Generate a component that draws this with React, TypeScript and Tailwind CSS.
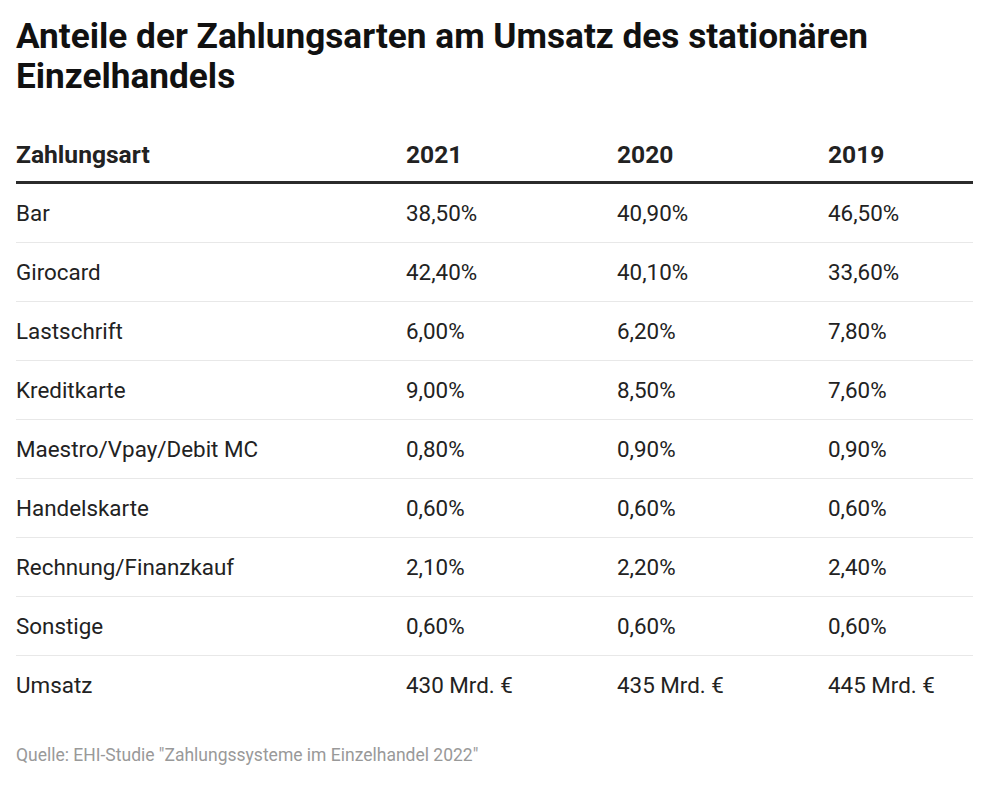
import React from 'react';

const rows: [string, string, string, string][] = [
  ['Bar', '38,50%', '40,90%', '46,50%'],
  ['Girocard', '42,40%', '40,10%', '33,60%'],
  ['Lastschrift', '6,00%', '6,20%', '7,80%'],
  ['Kreditkarte', '9,00%', '8,50%', '7,60%'],
  ['Maestro/Vpay/Debit MC', '0,80%', '0,90%', '0,90%'],
  ['Handelskarte', '0,60%', '0,60%', '0,60%'],
  ['Rechnung/Finanzkauf', '2,10%', '2,20%', '2,40%'],
  ['Sonstige', '0,60%', '0,60%', '0,60%'],
  ['Umsatz', '430 Mrd. €', '435 Mrd. €', '445 Mrd. €'],
];

const App: React.FC = () => {
  return (
    <div className="min-h-screen bg-white pl-4 pt-4 text-[#222] font-['Roboto',sans-serif]">
      <h1 className="w-[957px] text-[35.2px] leading-[40px] font-bold text-[#111]">
        Anteile der Zahlungsarten am Umsatz des stationären Einzelhandels
      </h1>

      <div className="mt-[33px] w-[957px]">
        <div className="grid grid-cols-[390px_211px_211px_1fr] border-b-[3px] border-[#2b2b2b] py-[11px] text-[24.6px] leading-[30px] font-bold">
          <div>Zahlungsart</div>
          <div>2021</div>
          <div>2020</div>
          <div>2019</div>
        </div>
        {rows.map((r, i) => (
          <div
            key={r[0]}
            className={`grid grid-cols-[390px_211px_211px_1fr] py-4 text-[22.4px] leading-[26px] ${
              i < rows.length - 1 ? 'border-b border-[#e8e8e8]' : ''
            }`}
          >
            <div>{r[0]}</div>
            <div>{r[1]}</div>
            <div>{r[2]}</div>
            <div>{r[3]}</div>
          </div>
        ))}
      </div>

      <p className="mt-[29px] text-[17.5px] leading-6 text-[#999]">
        Quelle: EHI-Studie "Zahlungssysteme im Einzelhandel 2022"
      </p>
    </div>
  );
};

export default App;
